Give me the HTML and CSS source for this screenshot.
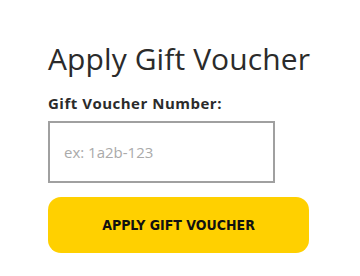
FILE: index.html
```html
<!DOCTYPE html>
<html>
<head>
<meta charset="utf-8">
<link rel="stylesheet" href="styles.css">
</head>
<body>
<div class="panel">
  <h1 class="title">Apply Gift Voucher</h1>
  <label class="label" for="code">Gift Voucher Number:</label>
  <input class="field" id="code" type="text" placeholder="ex: 1a2b-123">
  <button class="btn" type="button">APPLY GIFT VOUCHER</button>
</div>
</body>
</html>
```
FILE: styles.css
```css
html, body {
  margin: 0;
  padding: 0;
  background: #ffffff;
}
.panel {
  display: flex;
  flex-direction: column;
  align-items: flex-start;
  padding: 40px 0 0 48px;
  font-family: "Open Sans", Lato, sans-serif;
}
.title {
  margin: 0;
  font-size: 30px;
  font-weight: 500;
  line-height: 38px;
  letter-spacing: 0.1px;
  color: #2b2b2b;
}
.label {
  margin-top: 15px;
  font-size: 15px;
  font-weight: 700;
  line-height: 20px;
  letter-spacing: 0.5px;
  color: #2b2b2b;
}
.field {
  box-sizing: border-box;
  margin: 8px 0 0 0;
  width: 227px;
  height: 62px;
  border: 2px solid #a0a0a0;
  border-radius: 0;
  padding: 0 14px;
  font-family: "Open Sans", sans-serif;
  font-size: 15px;
  color: #333;
  outline: none;
}
.field::placeholder {
  color: #aaaaaa;
}
.btn {
  margin: 14px 0 0 0;
  width: 261px;
  height: 56px;
  border: none;
  border-radius: 13px;
  background: #ffd000;
  color: #111111;
  font-family: "DejaVu Sans Condensed", "DejaVu Sans", sans-serif;
  font-weight: 700;
  font-size: 14px;
  cursor: pointer;
}
```
